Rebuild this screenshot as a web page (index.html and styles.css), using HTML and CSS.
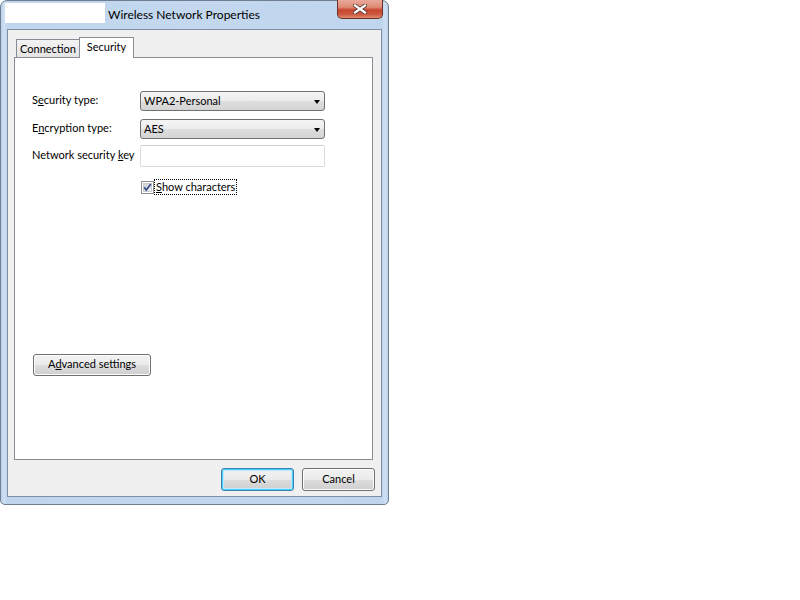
FILE: index.html
```html
<!DOCTYPE html>
<html>
<head>
<meta charset="utf-8">
<link rel="stylesheet" href="styles.css">
</head>
<body>
<div class="window">
  <div class="titlebar">
    <div class="blank"></div>
    <div class="title">Wireless Network Properties</div>
    <div class="close">
      <svg width="14" height="10" viewBox="0 0 14 10">
        <path d="M2 1.5 L12 8.5 M12 1.5 L2 8.5" stroke="#5a3a36" stroke-width="4" stroke-linecap="square"/>
        <path d="M2 1.5 L12 8.5 M12 1.5 L2 8.5" stroke="#ffffff" stroke-width="2.2" stroke-linecap="square"/>
      </svg>
    </div>
  </div>
  <div class="client">
    <div class="tabs">
      <div class="tab">Connection</div>
      <div class="tab selected">Security</div>
    </div>
    <div class="panel">
      <div class="row r1">
        <div class="label">S<u>e</u>curity type:</div>
        <div class="combo"><span>WPA2-Personal</span><span class="arrow"></span></div>
      </div>
      <div class="row r2">
        <div class="label">E<u>n</u>cryption type:</div>
        <div class="combo"><span>AES</span><span class="arrow"></span></div>
      </div>
      <div class="row r3">
        <div class="label">Network security <u>k</u>ey</div>
        <div class="input"></div>
      </div>
      <div class="checkrow">
        <svg class="check" width="13" height="13" viewBox="0 0 13 13">
          <defs>
            <linearGradient id="cb" x1="0" y1="0" x2="1" y2="1">
              <stop offset="0" stop-color="#cbcfd5"/>
              <stop offset="1" stop-color="#f6f6f6"/>
            </linearGradient>
          </defs>
          <rect x="0.5" y="0.5" width="12" height="12" fill="#fff" stroke="#8e8f8f"/>
          <rect x="2.5" y="2.5" width="8" height="8" fill="url(#cb)" stroke="#c9ccd1" stroke-width="1"/>
          <path d="M3.2 6.3 L5.3 9 L9.8 3" fill="none" stroke="#3a4f8a" stroke-width="1.8"/>
        </svg>
        <span class="focus"><u>S</u>how characters</span>
      </div>
      <div class="adv"><div class="btn advbtn">A<u>d</u>vanced settings</div></div>
    </div>
    <div class="buttons">
      <div class="btn ok">OK</div>
      <div class="btn">Cancel</div>
    </div>
  </div>
</div>
</body>
</html>
```

FILE: styles.css
```css
html, body {
  margin: 0;
  padding: 0;
  background: #ffffff;
}
body {
  font-family: Lato, "Noto Sans", sans-serif;
  font-size: 11px;
  color: #000;
}
.window {
  width: 389px;
  height: 505px;
  box-sizing: border-box;
  border: 1px solid #6f7d8e;
  border-radius: 7px 7px 5px 5px;
  background: linear-gradient(90deg, #b9d1ea 0px, #cfe0f2 3px, #c0d6ee 6px, #c3d8ef 50%, #c0d6ee calc(100% - 6px), #cfe0f2 calc(100% - 3px), #b9d1ea 100%);
  display: flex;
  flex-direction: column;
  padding: 0 6px 7px 6px;
}
.titlebar {
  height: 28px;
  display: flex;
  align-items: flex-start;
  margin-left: -2px;
  margin-right: -1px;
}
.blank {
  width: 100px;
  height: 20px;
  margin-top: 2px;
  background: #ffffff;
}
.title {
  margin-left: 3px;
  margin-top: 6px;
  font-size: 12px;
  line-height: 16px;
  color: #000;
}
.close {
  margin-left: auto;
  margin-top: -1px;
  width: 46px;
  height: 19px;
  box-sizing: border-box;
  border: 1px solid #6d3027;
  border-top: none;
  border-radius: 0 0 5px 5px;
  background: linear-gradient(#e9a99a 0%, #de8b74 40%, #c8452e 55%, #cc5a40 80%, #e08c6e 100%);
  display: flex;
  align-items: center;
  justify-content: center;
}
.client {
  flex: 1;
  background: #f0f0f0;
  border: 1px solid #7e8fa3;
  display: flex;
  flex-direction: column;
  padding: 7px 8px 5px 6px;
  min-height: 0;
}
.tabs {
  height: 20px;
  display: flex;
  align-items: flex-end;
  padding-left: 2px;
}
.tab {
  height: 18px;
  box-sizing: border-box;
  width: 64px;
  border: 1px solid #898c95;
  border-bottom: none;
  background: linear-gradient(#f3f3f3, #e4e4e4);
  display: flex;
  align-items: center;
  justify-content: center;
  line-height: 16px;
  padding-top: 1px;
}
.tab.selected {
  position: relative;
  height: 21px;
  margin-bottom: -1px;
  margin-left: -1px;
  width: 55px;
  background: #ffffff;
  padding-bottom: 3px;
}
.panel {
  flex: 1;
  background: #ffffff;
  border: 1px solid #898c95;
  display: flex;
  flex-direction: column;
  padding-left: 17px;
}
.row {
  display: flex;
  align-items: center;
}
.r1 { margin-top: 33px; height: 20px; }
.r2 { margin-top: 8px; height: 20px; }
.r3 { margin-top: 6px; height: 22px; }
.label {
  width: 108px;
  flex: none;
  white-space: nowrap;
  line-height: 14px;
  margin-top: -2px;
}
.r3 .label { margin-top: -3px; }
.combo {
  width: 185px;
  height: 20px;
  box-sizing: border-box;
  border: 1px solid #707070;
  border-radius: 3px;
  background: linear-gradient(#f4f4f4 0%, #ececec 50%, #dedede 51%, #d4d4d4 100%);
  display: flex;
  align-items: center;
  padding-left: 3px;
  padding-right: 4px;
  line-height: 14px;
}
.arrow {
  margin-left: auto;
  width: 0;
  height: 0;
  border-left: 3.5px solid transparent;
  border-right: 3.5px solid transparent;
  border-top: 4px solid #000;
  margin-top: 1px;
}
.input {
  width: 185px;
  height: 22px;
  box-sizing: border-box;
  border: 1px solid #dadada;
  border-top-color: #cfcfcf;
  border-radius: 2px;
  background: #fff;
}
.checkrow {
  margin-top: 12px;
  margin-left: 109px;
  display: flex;
  align-items: center;
  height: 16px;
}
.check {
  flex: none;
}
.focus {
  border: 1px dotted #000;
  padding: 0 1px 0 1px;
  line-height: 14px;
}
.adv {
  margin-top: 159px;
  padding-left: 1px;
  display: flex;
}
.btn {
  height: 23px;
  box-sizing: border-box;
  border: 1px solid #707070;
  border-radius: 3px;
  background: linear-gradient(#f2f2f2 0%, #ebebeb 50%, #dddddd 51%, #cfcfcf 100%);
  display: flex;
  align-items: center;
  justify-content: center;
  width: 73px;
  line-height: 14px;
  padding-bottom: 2px;
  box-shadow: inset 0 0 0 1px #fcfcfc;
}
.advbtn {
  width: 118px;
  height: 22px;
}
.buttons {
  margin-top: 8px;
  display: flex;
  justify-content: flex-end;
  gap: 8px;
  margin-right: -2px;
}
.btn.ok {
  border-color: #3c7fb1;
  box-shadow: inset 0 0 0 1px #48d1ff, inset 0 0 0 2px #c0e7fb;
}
```
